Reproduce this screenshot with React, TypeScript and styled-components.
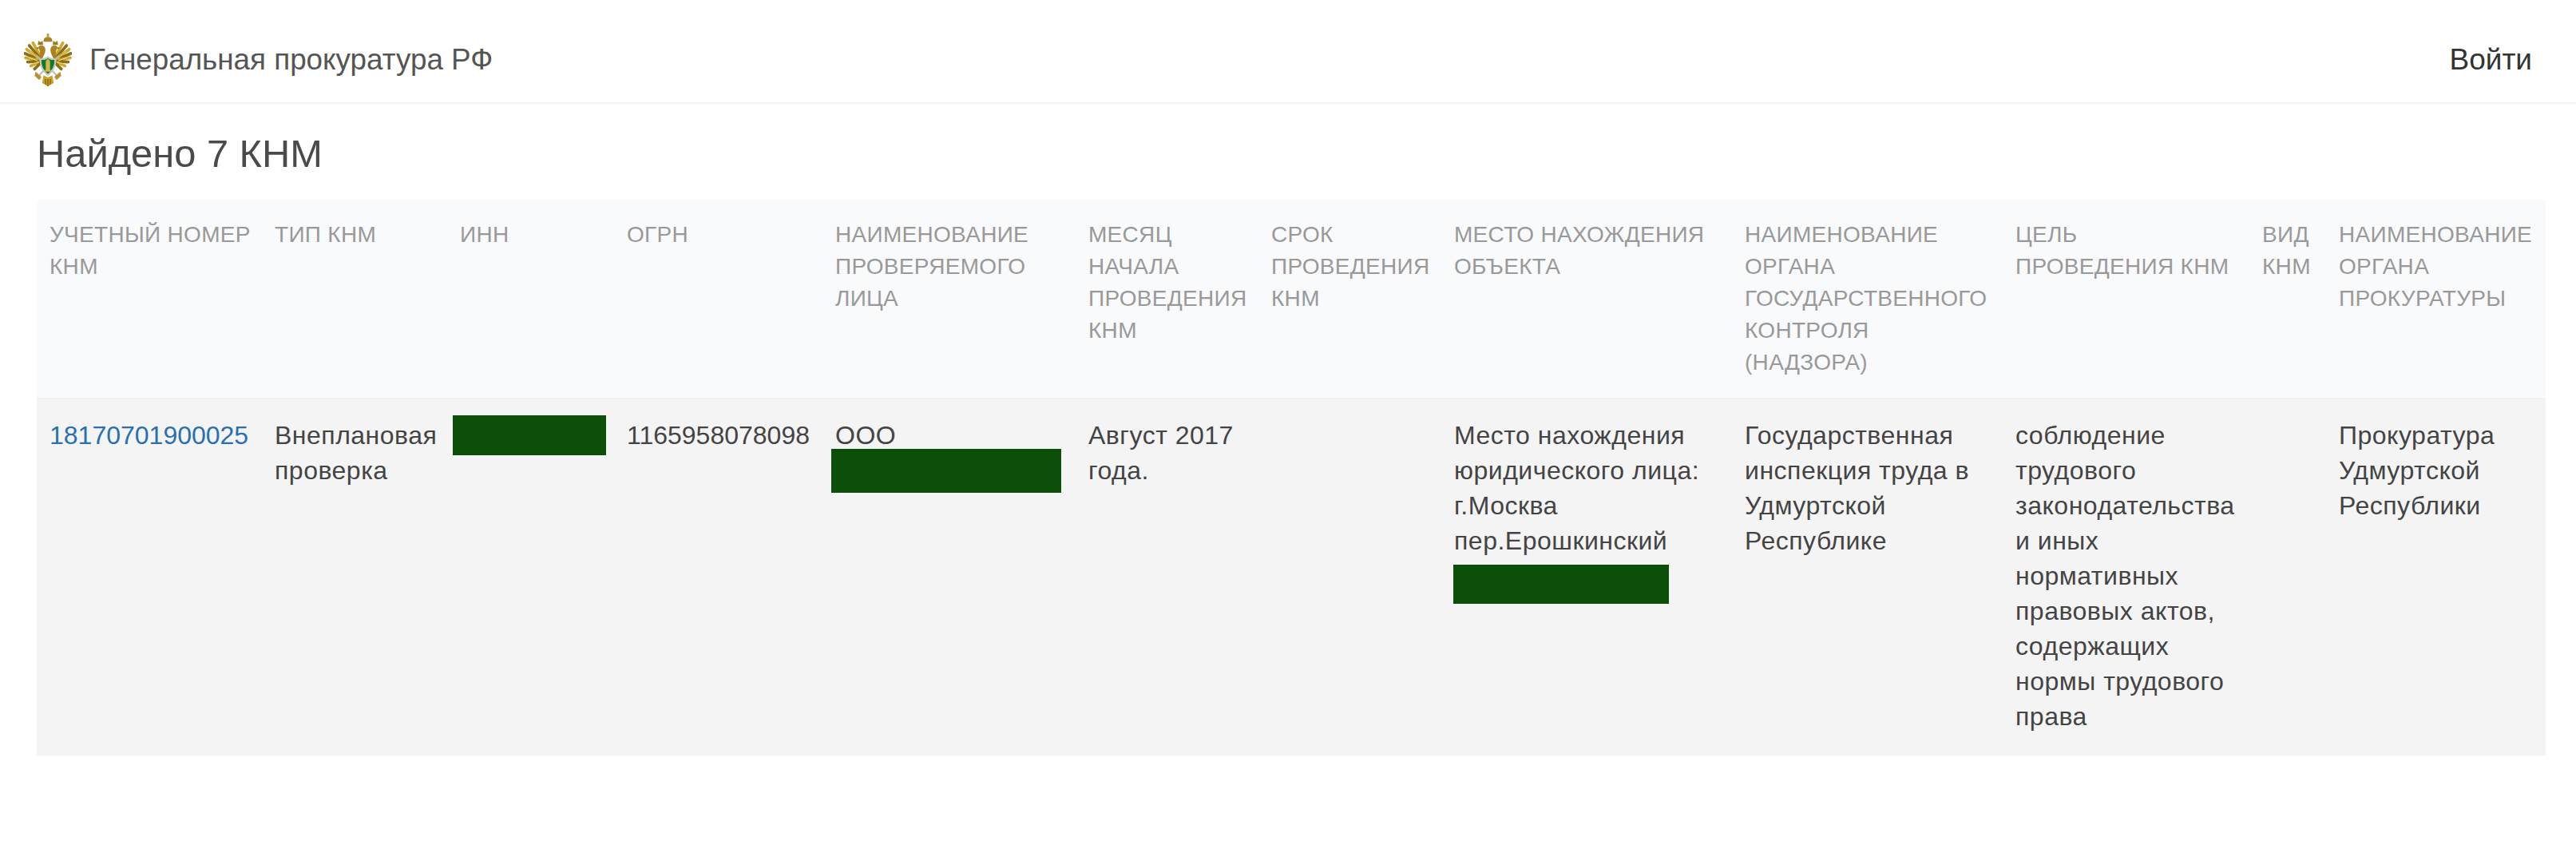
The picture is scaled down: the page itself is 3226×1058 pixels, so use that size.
import React from "react";
import styled, { createGlobalStyle } from "styled-components";

const GlobalStyle = createGlobalStyle`
    html, body {
        margin: 0;
        padding: 0;
        background: #fff;
    }
    body {
        font-family: "Liberation Sans", Arial, sans-serif;
        color: #444;
    }
`

const Navbar = styled.nav`
    box-sizing: border-box;
    display: flex;
    align-items: center;
    justify-content: space-between;
    height: 130px;
    padding: 22px 55px 0 30px;
    border-bottom: 2px solid #f3f3f3;
`

const Brand = styled.a`
    display: flex;
    align-items: center;
    gap: 22px;
    font-size: 36.8px;
    color: #555;
    text-decoration: none;
`

const Login = styled.a`
    font-size: 37px;
    color: #333;
    text-decoration: none;
`

const Main = styled.main`
    padding: 0 38px 0 46px;
`

const Title = styled.h1`
    margin: 0;
    padding: 32px 0 28px;
    font-size: 48.8px;
    line-height: 60px;
    font-weight: 400;
    color: #4a4a4a;
`

const Table = styled.table`
    width: 3142px;
    table-layout: fixed;
    border-collapse: collapse;
`

const HeadRow = styled.tr`
    background: #f9fafb;
    border-bottom: 2px solid #f1f1f1;
`

const HeadCell = styled.th`
    padding: 24px 12px 24px 16px;
    font-size: 28px;
    line-height: 40px;
    letter-spacing: 0.3px;
    font-weight: 400;
    text-align: left;
    vertical-align: top;
    text-transform: uppercase;
    color: #999;
`

const BodyRow = styled.tr`
    background: #f4f4f4;
`

const BodyCell = styled.td`
    position: relative;
    padding: 23px 14px 27px 16px;
    font-size: 32px;
    line-height: 44px;
    letter-spacing: 0.5px;
    vertical-align: top;
    color: #444;
`

const RecordLink = styled.a`
    color: #2a6fb0;
    letter-spacing: 0;
    text-decoration: none;
`

const Digits = styled.span`
    letter-spacing: 0;
`

type RedactionProps = {
    $left: number
    $top: number
    $width: number
    $height: number
}

const Redaction = styled.span<RedactionProps>`
    position: absolute;
    left: ${({ $left }) => $left}px;
    top: ${({ $top }) => $top}px;
    width: ${({ $width }) => $width}px;
    height: ${({ $height }) => $height}px;
    background: #0b4f08;
`

const columns = [
    { title: "Учетный номер КНМ", width: 282 },
    { title: "Тип КНМ", width: 232 },
    { title: "ИНН", width: 209 },
    { title: "ОГРН", width: 261 },
    { title: "Наименование проверяемого лица", width: 317 },
    { title: "Месяц начала проведения КНМ", width: 229 },
    { title: "Срок проведения КНМ", width: 229 },
    { title: "Место нахождения объекта", width: 364 },
    { title: "Наименование органа государственного контроля (надзора)", width: 339 },
    { title: "Цель проведения КНМ", width: 309 },
    { title: "Вид КНМ", width: 96 },
    { title: "Наименование органа прокуратуры", width: 275 },
]

// концы перьев крыла, от верхнего к нижнему
const feathers = [
    [64, 68], [50, 78], [40, 92], [34, 108], [36, 124], [44, 140], [56, 154], [70, 166],
]

const Wing: React.FC<{ mirrored?: boolean }> = ({ mirrored }) => (
    <g transform={mirrored ? "translate(240 0) scale(-1 1)" : undefined}>
        {feathers.map(([x, y], index) => (
            <line
                key={index}
                x1="100"
                y1="136"
                x2={x}
                y2={y}
                stroke={index % 2 ? "#8d6f17" : "#cda92e"}
                strokeWidth="11"
                strokeLinecap="round"
            />
        ))}
        <path d="M52 100 L84 128 M46 122 L82 136 M60 146 L86 142" stroke="#eedb84" strokeWidth="3" />
        {/* шея, голова, корона */}
        <path d="M84 84 C90 74 104 76 110 88 C112 100 108 112 100 124 L88 118 C92 106 90 96 84 84Z" fill="#a9841f" />
        <path d="M84 84 L74 88 L86 92Z" fill="#8d6f17" />
        <path d="M82 76 L84 60 L92 66 L100 60 L102 76Z" fill="#9a7a1c" />
    </g>
)

const Emblem: React.FC = () => (
    <svg width="60" height="68" viewBox="30 30 180 204" aria-hidden="true">
        <Wing />
        <Wing mirrored />
        {/* большая корона */}
        <path d="M104 64 C102 52 110 46 120 46 C130 46 138 52 136 64Z" fill="#a9852a" />
        <rect x="116" y="33" width="8" height="14" fill="#bd9a34" />
        {/* меч */}
        <path d="M78 116 L92 132 M162 116 L148 132 M86 192 L104 172 M154 192 L136 172" stroke="#b9b9b0" strokeWidth="6" />
        {/* щит */}
        <path d="M90 126 C104 128 112 124 120 118 C128 124 136 128 150 126 C154 152 142 178 120 192 C98 178 86 152 90 126Z" fill="#c5c8c0" />
        <path d="M96 132 C106 133 114 130 120 126 C126 130 134 133 144 132 C146 152 136 172 120 184 C104 172 94 152 96 132Z" fill="#0f7a2c" />
        <path d="M115 130 H125 V136 H128 V170 H131 V176 H109 V170 H112 V136 H115Z" fill="#d8b648" />
        {/* хвост и лапы */}
        <path d="M104 190 L120 198 L136 190 L142 218 L120 232 L98 218Z" fill="#c9a227" />
        <path d="M110 204 L112 224 M120 204 V230 M130 204 L128 224" stroke="#7f6212" strokeWidth="4" />
        <path d="M74 176 L96 196 L88 208 L70 192Z M166 176 L144 196 L152 208 L170 192Z" fill="#b8922a" />
    </svg>
)

export default function App() {
    return (
        <>
            <GlobalStyle />
            <Navbar>
                <Brand href="#">
                    <Emblem />
                    Генеральная прокуратура РФ
                </Brand>
                <Login href="#">Войти</Login>
            </Navbar>
            <Main>
                <Title>Найдено 7 КНМ</Title>
                <Table>
                    <colgroup>
                        {columns.map(({ title, width }) => (
                            <col key={title} width={width} />
                        ))}
                    </colgroup>
                    <thead>
                        <HeadRow>
                            {columns.map(({ title }) => (
                                <HeadCell key={title}>{title}</HeadCell>
                            ))}
                        </HeadRow>
                    </thead>
                    <tbody>
                        <BodyRow>
                            <BodyCell><RecordLink href="#">18170701900025</RecordLink></BodyCell>
                            <BodyCell>Внеплановая проверка</BodyCell>
                            <BodyCell><Redaction $left={7} $top={20} $width={192} $height={50} /></BodyCell>
                            <BodyCell><Digits>1165958078098</Digits></BodyCell>
                            <BodyCell>
                                ООО
                                <Redaction $left={11} $top={62} $width={288} $height={55} />
                            </BodyCell>
                            <BodyCell>Август 2017 года.</BodyCell>
                            <BodyCell />
                            <BodyCell>
                                Место нахождения юридического лица: г.Москва пер.Ерошкинский
                                <Redaction $left={15} $top={207} $width={270} $height={49} />
                            </BodyCell>
                            <BodyCell>Государственная инспекция труда в Удмуртской Республике</BodyCell>
                            <BodyCell>соблюдение трудового законодательства и иных нормативных правовых актов, содержащих нормы трудового права</BodyCell>
                            <BodyCell />
                            <BodyCell>Прокуратура Удмуртской Республики</BodyCell>
                        </BodyRow>
                    </tbody>
                </Table>
            </Main>
        </>
    );
}
